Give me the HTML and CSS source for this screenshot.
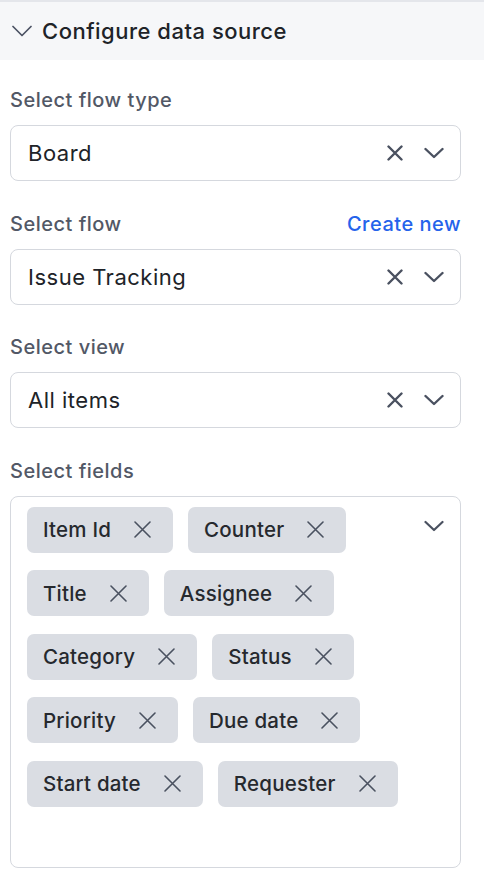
FILE: index.html
```html
<!DOCTYPE html>
<html>
<head>
<meta charset="utf-8">
<link rel="stylesheet" href="styles.css">
</head>
<body>
<div class="panel">
  <div class="header">
    <svg class="hdr-chev" width="20" height="12" viewBox="0 0 20 12"><path d="M1 1.5 L10 10.5 L19 1.5" fill="none" stroke="#4b5263" stroke-width="1.7" stroke-linecap="round" stroke-linejoin="round"/></svg>
    <span>Configure data source</span>
  </div>
  <div class="body">
    <div class="group">
      <div class="label-row"><span class="label">Select flow type</span></div>
      <div class="select">
        <span class="value">Board</span>
        <span class="icons">
          <svg width="16" height="16" viewBox="0 0 16 16"><path d="M1.5 1.5 L14.5 14.5 M14.5 1.5 L1.5 14.5" stroke="#4a5160" stroke-width="2.4" stroke-linecap="round"/></svg>
          <svg width="20" height="12" viewBox="0 0 20 12"><path d="M1.5 2 L10 10 L18.5 2" fill="none" stroke="#4a5160" stroke-width="2.4" stroke-linecap="round" stroke-linejoin="round"/></svg>
        </span>
      </div>
    </div>
    <div class="group">
      <div class="label-row"><span class="label">Select flow</span><span class="link">Create new</span></div>
      <div class="select">
        <span class="value">Issue Tracking</span>
        <span class="icons">
          <svg width="16" height="16" viewBox="0 0 16 16"><path d="M1.5 1.5 L14.5 14.5 M14.5 1.5 L1.5 14.5" stroke="#4a5160" stroke-width="2.4" stroke-linecap="round"/></svg>
          <svg width="20" height="12" viewBox="0 0 20 12"><path d="M1.5 2 L10 10 L18.5 2" fill="none" stroke="#4a5160" stroke-width="2.4" stroke-linecap="round" stroke-linejoin="round"/></svg>
        </span>
      </div>
    </div>
    <div class="group">
      <div class="label-row"><span class="label">Select view</span></div>
      <div class="select">
        <span class="value">All items</span>
        <span class="icons">
          <svg width="16" height="16" viewBox="0 0 16 16"><path d="M1.5 1.5 L14.5 14.5 M14.5 1.5 L1.5 14.5" stroke="#4a5160" stroke-width="2.4" stroke-linecap="round"/></svg>
          <svg width="20" height="12" viewBox="0 0 20 12"><path d="M1.5 2 L10 10 L18.5 2" fill="none" stroke="#4a5160" stroke-width="2.4" stroke-linecap="round" stroke-linejoin="round"/></svg>
        </span>
      </div>
    </div>
    <div class="group">
      <div class="label-row"><span class="label">Select fields</span></div>
      <div class="multi">
        <div class="chips">
          <span class="chip">Item Id<svg width="17" height="17" viewBox="0 0 17 17"><path d="M1 1 L16 16 M16 1 L1 16" stroke="#4a5160" stroke-width="1.6" stroke-linecap="round"/></svg></span>
          <span class="chip">Counter<svg width="17" height="17" viewBox="0 0 17 17"><path d="M1 1 L16 16 M16 1 L1 16" stroke="#4a5160" stroke-width="1.6" stroke-linecap="round"/></svg></span>
          <span class="chip">Title<svg width="17" height="17" viewBox="0 0 17 17"><path d="M1 1 L16 16 M16 1 L1 16" stroke="#4a5160" stroke-width="1.6" stroke-linecap="round"/></svg></span>
          <span class="chip">Assignee<svg width="17" height="17" viewBox="0 0 17 17"><path d="M1 1 L16 16 M16 1 L1 16" stroke="#4a5160" stroke-width="1.6" stroke-linecap="round"/></svg></span>
          <span class="chip">Category<svg width="17" height="17" viewBox="0 0 17 17"><path d="M1 1 L16 16 M16 1 L1 16" stroke="#4a5160" stroke-width="1.6" stroke-linecap="round"/></svg></span>
          <span class="chip">Status<svg width="17" height="17" viewBox="0 0 17 17"><path d="M1 1 L16 16 M16 1 L1 16" stroke="#4a5160" stroke-width="1.6" stroke-linecap="round"/></svg></span>
          <span class="chip">Priority<svg width="17" height="17" viewBox="0 0 17 17"><path d="M1 1 L16 16 M16 1 L1 16" stroke="#4a5160" stroke-width="1.6" stroke-linecap="round"/></svg></span>
          <span class="chip">Due date<svg width="17" height="17" viewBox="0 0 17 17"><path d="M1 1 L16 16 M16 1 L1 16" stroke="#4a5160" stroke-width="1.6" stroke-linecap="round"/></svg></span>
          <span class="chip">Start date<svg width="17" height="17" viewBox="0 0 17 17"><path d="M1 1 L16 16 M16 1 L1 16" stroke="#4a5160" stroke-width="1.6" stroke-linecap="round"/></svg></span>
          <span class="chip">Requester<svg width="17" height="17" viewBox="0 0 17 17"><path d="M1 1 L16 16 M16 1 L1 16" stroke="#4a5160" stroke-width="1.6" stroke-linecap="round"/></svg></span>
        </div>
        <svg class="multi-chev" width="20" height="12" viewBox="0 0 20 12"><path d="M1.5 2 L10 10 L18.5 2" fill="none" stroke="#4a5160" stroke-width="2.2" stroke-linecap="round" stroke-linejoin="round"/></svg>
      </div>
    </div>
  </div>
</div>
</body>
</html>
```

FILE: styles.css
```css
* { box-sizing: border-box; }
html, body { margin: 0; padding: 0; background: #ffffff; }
body {
  font-family: Inter, "Noto Sans", "Liberation Sans", sans-serif;
  color: #202328;
  width: 484px;
}
.header {
  height: 60px;
  border-top: 2px solid #e4e6eb;
  background: #f6f7f9;
  display: flex;
  align-items: center;
  padding-left: 12px;
  gap: 10px;
  font-size: 22px;
  letter-spacing: 0.5px;
  font-weight: 500;
  color: #202328;
}
.body {
  padding: 28px 23px 0 10px;
  display: flex;
  flex-direction: column;
  gap: 30.5px;
}
.group { display: flex; flex-direction: column; gap: 13px; }
.label-row {
  display: flex;
  justify-content: space-between;
  align-items: center;
  height: 24px;
}
.label { font-size: 20px; letter-spacing: 0.5px; font-weight: 500; color: #525866; }
.link { font-size: 20px; letter-spacing: 0.5px; font-weight: 500; color: #2563eb; }
.select {
  height: 56px;
  border: 1.5px solid #d5d8de;
  border-radius: 8px;
  display: flex;
  align-items: center;
  justify-content: space-between;
  padding: 0 16px 0 17px;
}
.value { font-size: 22px; letter-spacing: 0.5px; font-weight: 400; color: #202328; }
.icons { display: flex; align-items: center; gap: 21px; }
.icons svg { display: block; }
.multi {
  height: 372px;
  border: 1.5px solid #d5d8de;
  border-radius: 8px;
  display: flex;
  justify-content: space-between;
  align-items: flex-start;
  padding: 10px 16px 0 16px;
}
.chips {
  display: flex;
  flex-wrap: wrap;
  gap: 17.5px 15px;
  width: 380px;
}
.chip {
  height: 46px;
  background: #dadde3;
  border-radius: 7px;
  display: flex;
  align-items: center;
  gap: 23px;
  padding: 0 22px 0 16px;
  font-size: 20.5px;
  letter-spacing: 0.2px;
  font-weight: 500;
  color: #26292e;
}
.chip svg { display: block; }
.multi-chev { margin-top: 13px; display: block; }
```
